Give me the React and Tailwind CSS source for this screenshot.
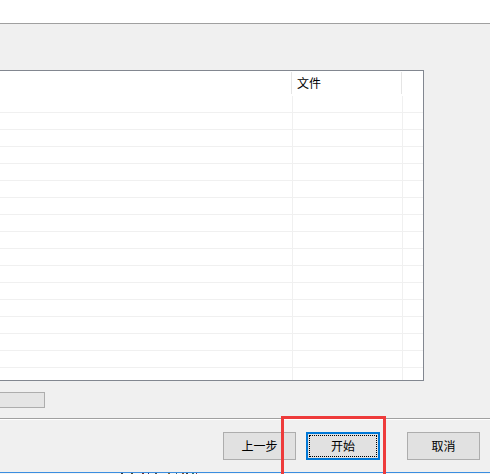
import React from "react";

const font = { fontFamily: '"Noto Sans CJK SC", "Microsoft YaHei", sans-serif' };

function Row({ last }) {
  return (
    <div className="flex h-[17px] shrink-0 border-b border-[#f0f0f0]">
      <div className="w-[292px] shrink-0" />
      <div className="w-[110px] shrink-0 border-l border-[#f0f0f0]" />
      <div className="w-[20px] shrink-0 border-l border-[#f0f0f0]" />
    </div>
  );
}

function Btn({ children, w, focus }) {
  return (
    <div
      className={
        "relative flex h-[28px] items-center justify-center text-[12px] text-black " +
        (focus
          ? "border-2 border-[#0078d7] bg-[#e1e1e1]"
          : "border border-[#adadad] bg-[#e1e1e1]")
      }
      style={{ width: w }}
    >
      {focus && (
        <div className="pointer-events-none absolute inset-[1px] border border-dotted border-black" />
      )}
      <span className="leading-none">{children}</span>
    </div>
  );
}

export default function App() {
  const rows = Array.from({ length: 17 });
  return (
    <div
      className="relative flex h-[474px] w-[490px] flex-col overflow-hidden bg-[#f0f0f0]"
      style={font}
    >
      <div className="h-[23px] shrink-0 bg-white" />
      <div className="h-px shrink-0 bg-[#a0a0a0]" />
      <div className="h-[46px] shrink-0" />
      {/* table */}
      <div className="flex h-[311px] w-[424px] shrink-0 flex-col overflow-hidden border-y border-r border-[#828790] bg-white">
        <div className="flex h-[25px] shrink-0">
          <div className="w-[291px] shrink-0" />
          <div className="mt-[1px] h-[22px] w-px shrink-0 bg-[#e5e5e5]" />
          <div className="w-[109px] shrink-0 pl-[5px] pt-[5px] text-[12px] leading-[14px] text-black">
            文件
          </div>
          <div className="mt-[1px] h-[22px] w-px shrink-0 bg-[#e5e5e5]" />
          <div className="flex-1" />
        </div>
        {rows.map((_, i) => (
          <Row key={i} />
        ))}
      </div>
      <div className="h-[11px] shrink-0" />
      <div className="h-[16px] w-[45px] shrink-0 border-y border-r border-[#adadad] bg-[#e5e5e5]" />
      <div className="h-[10px] shrink-0" />
      <div className="h-px shrink-0 bg-[#a0a0a0]" />
      <div className="h-px shrink-0 bg-white" />
      <div className="flex h-[52px] shrink-0 items-start pt-[12px]">
        <div className="ml-[223px]">
          <Btn w={73}>上一步</Btn>
        </div>
        <div className="ml-[10px]">
          <Btn w={74} focus>
            开始
          </Btn>
        </div>
        <div className="ml-[27px]">
          <Btn w={73}>取消</Btn>
        </div>
      </div>
      <div className="h-px shrink-0 bg-[#3b8ee0]" />
      <div className="relative h-[2px] shrink-0 bg-[#f4f4f4]">
        <div className="absolute left-[121px] top-0 h-[2px] w-[2px] bg-[#3a3a3a]" />
        <div className="absolute left-[131px] top-0 h-[2px] w-[2px] bg-[#4a4a30]" />
        <div className="absolute left-[142px] top-0 h-[2px] w-[2px] bg-[#703030]" />
        <div className="absolute left-[148px] top-0 h-[2px] w-[1px] bg-[#303070]" />
        <div className="absolute left-[155px] top-0 h-[2px] w-[2px] bg-[#505050]" />
        <div className="absolute left-[168px] top-0 h-[2px] w-[2px] bg-[#806030]" />
        <div className="absolute left-[176px] top-0 h-[2px] w-[1px] bg-[#306080]" />
        <div className="absolute left-[182px] top-0 h-[2px] w-[2px] bg-[#805030]" />
        <div className="absolute left-[186px] top-0 h-[2px] w-[2px] bg-[#404040]" />
        <div className="absolute left-[192px] top-0 h-[2px] w-[2px] bg-[#307070]" />
        <div className="absolute left-[196px] top-0 h-[2px] w-[1px] bg-[#703050]" />
      </div>
      {/* red highlight */}
      <div className="pointer-events-none absolute left-[281px] top-[416px] h-[70px] w-[105px] border-[3px] border-[#ee3b3b]" />
    </div>
  );
}
